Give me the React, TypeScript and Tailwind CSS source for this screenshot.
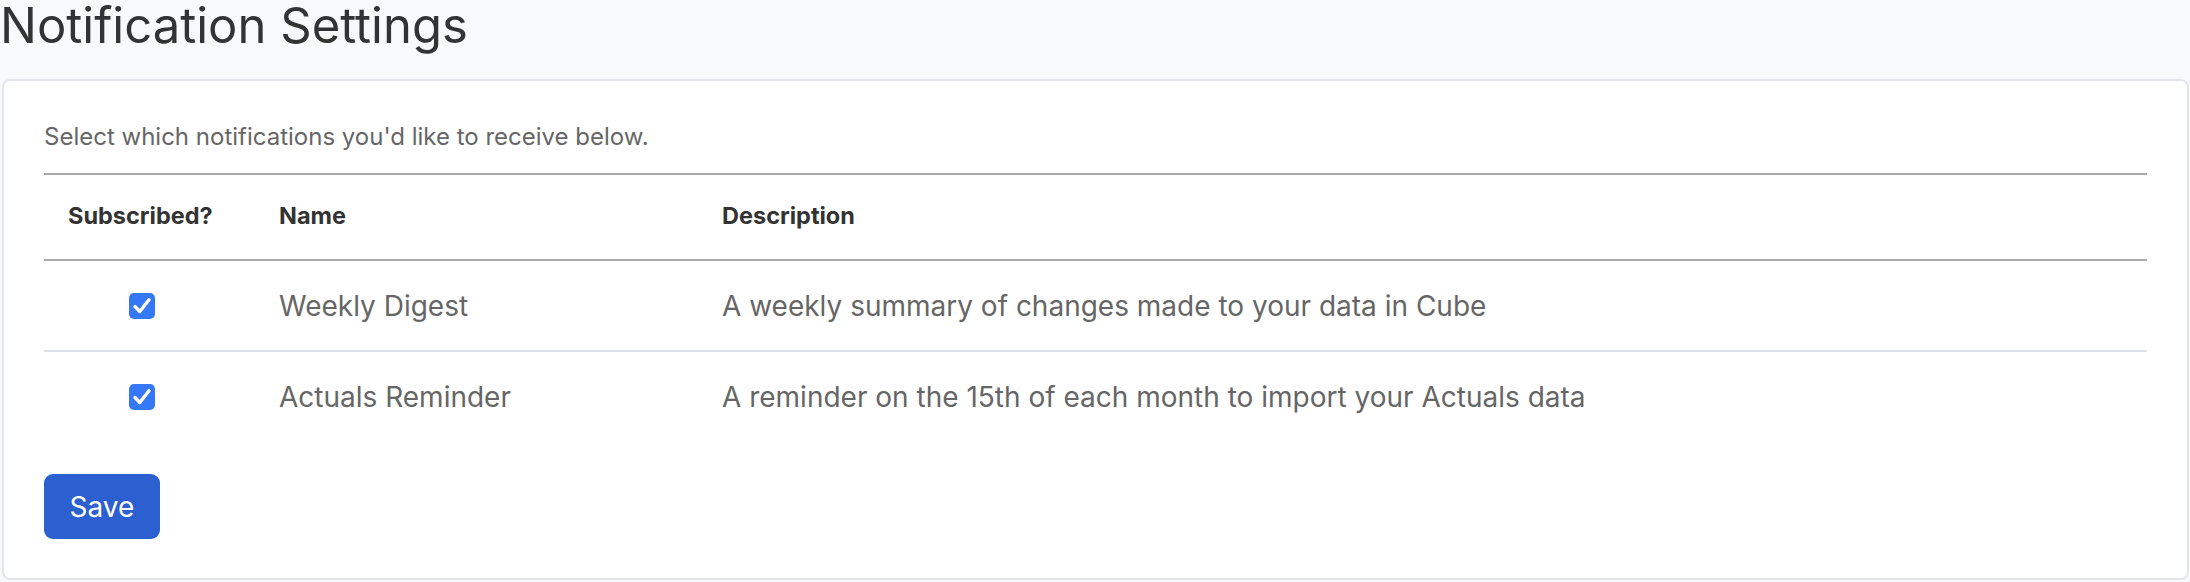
import { useState } from 'react';

type Notification = {
  id: string;
  name: string;
  description: string;
};

const NOTIFICATIONS: Notification[] = [
  {
    id: 'weekly-digest',
    name: 'Weekly Digest',
    description: 'A weekly summary of changes made to your data in Cube',
  },
  {
    id: 'actuals-reminder',
    name: 'Actuals Reminder',
    description:
      'A reminder on the 15th of each month to import your Actuals data',
  },
];

function Checkbox({
  checked,
  onChange,
}: {
  checked: boolean;
  onChange: () => void;
}) {
  return (
    <button
      type="button"
      role="checkbox"
      aria-checked={checked}
      onClick={onChange}
      className={
        checked
          ? 'inline-flex h-[26px] w-[26px] items-center justify-center rounded-[5px] bg-[#3478f6] align-middle'
          : 'inline-flex h-[26px] w-[26px] items-center justify-center rounded-[5px] border-2 border-[#9ca3af] bg-white align-middle'
      }
    >
      {checked && (
        <svg viewBox="0 0 26 26" className="h-[26px] w-[26px]">
          <path
            d="M6 13.5 L10.8 18.5 L20 6.8"
            fill="none"
            stroke="white"
            strokeWidth="3.4"
            strokeLinecap="round"
            strokeLinejoin="round"
          />
        </svg>
      )}
    </button>
  );
}

export default function App() {
  const [subscribed, setSubscribed] = useState<Record<string, boolean>>({
    'weekly-digest': true,
    'actuals-reminder': true,
  });

  const toggle = (id: string) =>
    setSubscribed((s) => ({ ...s, [id]: !s[id] }));

  return (
    <div className="min-h-screen bg-[#f8f9fa] font-['Inter',sans-serif]">
      <h1 className="pt-px text-[49px] font-normal leading-[49px] text-[#333]">
        Notification Settings
      </h1>

      <div className="ml-[2px] mr-[1px] mt-[29px] rounded-[8px] border-2 border-[#e2e5e9] bg-white px-[40px] pb-[39px] pt-[38px]">
        <p className="mb-[18px] text-[24px] leading-[36px] text-[#666]">
          Select which notifications you'd like to receive below.
        </p>

        <table className="w-full table-fixed border-collapse border-t-2 border-[#aaaaaa]">
          <colgroup>
            <col className="w-[196px]" />
            <col className="w-[443px]" />
            <col />
          </colgroup>
          <thead>
            <tr className="border-b-2 border-[#aaaaaa]">
              <th className="pb-[27px] pl-6 pt-[24px] text-left text-[23.5px] font-bold leading-[33px] text-[#333]">
                Subscribed?
              </th>
              <th className="pb-[27px] pl-[39px] pt-[24px] text-left text-[23.5px] font-bold leading-[33px] text-[#333]">
                Name
              </th>
              <th className="pb-[27px] pl-[39px] pt-[24px] text-left text-[23.5px] font-bold leading-[33px] text-[#333]">
                Description
              </th>
            </tr>
          </thead>
          <tbody>
            {NOTIFICATIONS.map((n, i) => (
              <tr
                key={n.id}
                className={
                  i < NOTIFICATIONS.length - 1
                    ? 'h-[91px] border-b-2 border-[#dee2e6]'
                    : 'h-[91px]'
                }
              >
                <td className="text-center align-middle">
                  <Checkbox
                    checked={subscribed[n.id]}
                    onChange={() => toggle(n.id)}
                  />
                </td>
                <td className="pl-[39px] align-middle text-[28px] leading-[42px] text-[#666]">
                  {n.name}
                </td>
                <td className="pl-[39px] align-middle text-[28px] leading-[42px] text-[#666]">
                  {n.description}
                </td>
              </tr>
            ))}
          </tbody>
        </table>

        <button
          type="button"
          className="mt-[32px] flex h-[65px] w-[116px] items-center justify-center rounded-[9px] bg-[#2c5fcf] text-[28px] leading-none text-white"
        >
          Save
        </button>
      </div>
    </div>
  );
}
